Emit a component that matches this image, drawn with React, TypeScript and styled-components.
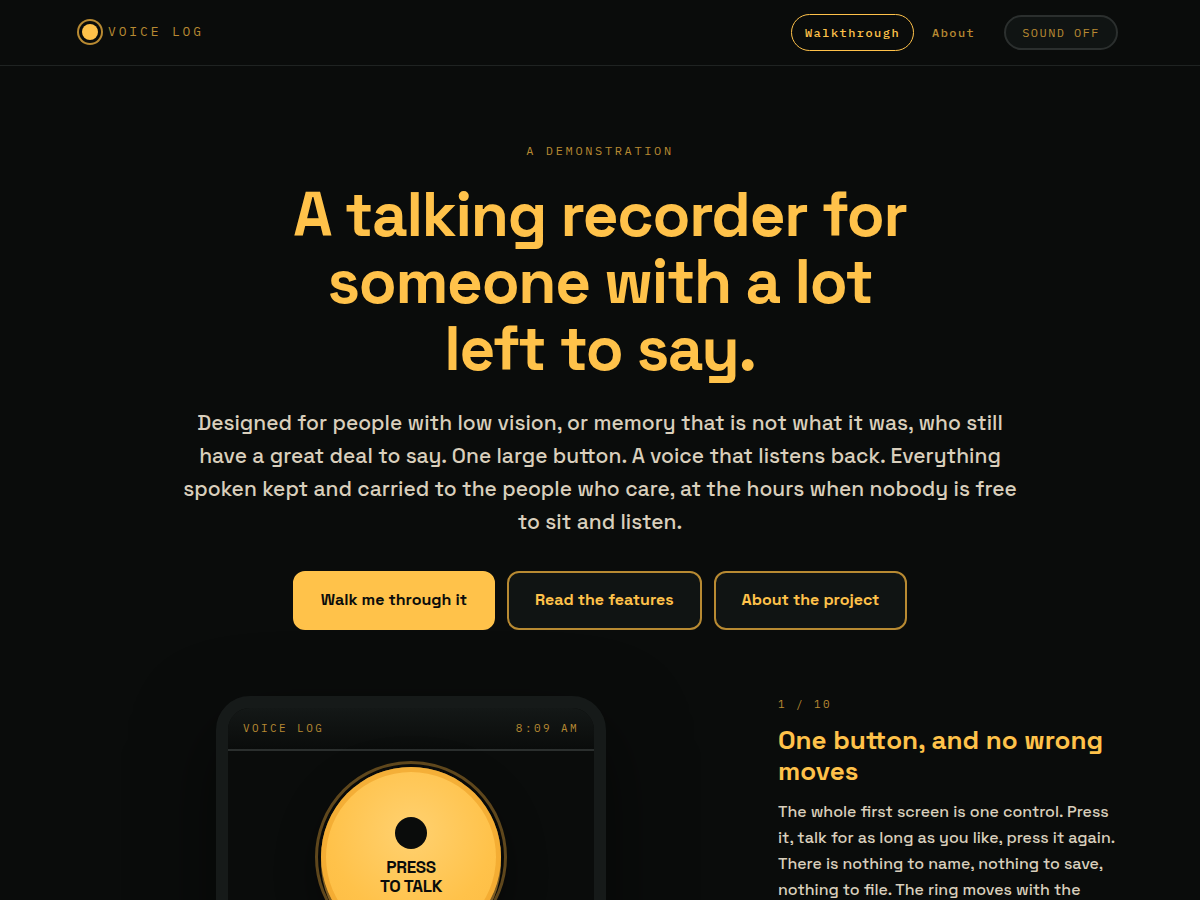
import React from 'react';
import styled, { createGlobalStyle } from 'styled-components';

const color = {
  page: '#0a0c0b',
  panel: '#101413',
  casing: '#161a19',
  line: '#1f2322',
  lineStrong: '#2b2f2e',
  amber: '#ffc24a',
  amberDim: '#b88a32',
  cream: '#d9cfbc',
  ink: '#0a0c0b',
};

const sans = "'Space Grotesk', Inter, 'Liberation Sans', sans-serif";
const mono = "'IBM Plex Mono', 'Liberation Mono', monospace";

const GlobalStyle = createGlobalStyle`
  *, *::before, *::after { box-sizing: border-box; }
  body {
    margin: 0;
    background: ${color.page};
    color: ${color.cream};
    font-family: ${sans};
    font-size: 16px;
  }
  h1, h2, p { margin: 0; }
`;

const Page = styled.div`
  min-height: 100vh;
`;

const Header = styled.header`
  border-bottom: 1px solid ${color.line};
`;

const Container = styled.div`
  max-width: 1100px;
  margin: 0 auto;
  padding: 0 32px;
`;

const HeaderRow = styled(Container)`
  display: flex;
  align-items: center;
  justify-content: space-between;
  min-height: 65px;
  padding-bottom: 1px;
`;

const Brand = styled.a`
  display: flex;
  align-items: center;
  gap: 10px;
  color: ${color.amberDim};
  font: 400 13px/20px ${mono};
  letter-spacing: 0.22em;
  text-decoration: none;
`;

const BrandDot = styled.span`
  width: 16px;
  height: 16px;
  border-radius: 50%;
  background: ${color.amber};
  box-shadow: 0 0 0 3px ${color.page}, 0 0 0 5px ${color.amberDim};
`;

const Nav = styled.nav`
  display: flex;
  align-items: center;
  gap: 4px;
`;

const NavLink = styled.a<{ $active?: boolean }>`
  padding: 9px 13px;
  border: 1px solid ${(p) => (p.$active ? color.amber : 'transparent')};
  border-radius: 999px;
  color: ${(p) => (p.$active ? color.amber : color.amberDim)};
  font: 500 12px/17px ${mono};
  letter-spacing: 0.12em;
  text-decoration: none;
`;

const SoundToggle = styled.button`
  margin-left: 11px;
  padding: 8px 16px;
  border: 2px solid ${color.lineStrong};
  border-radius: 999px;
  background: ${color.panel};
  color: ${color.amberDim};
  font: 400 12px/15px ${mono};
  letter-spacing: 0.12em;
  cursor: pointer;
`;

const Hero = styled(Container)`
  display: flex;
  flex-direction: column;
  align-items: center;
  padding-top: 76px;
  text-align: center;
`;

const Eyebrow = styled.p`
  margin-bottom: 21px;
  color: ${color.amberDim};
  font: 400 12px/18px ${mono};
  letter-spacing: 0.22em;
`;

const Headline = styled.h1`
  max-width: 640px;
  margin-bottom: 24px;
  color: ${color.amber};
  font-size: 62px;
  font-weight: 700;
  letter-spacing: -0.02em;
  line-height: 67px;
`;

const Lede = styled.p`
  max-width: 840px;
  margin-bottom: 33px;
  font-size: 21px;
  font-weight: 500;
  line-height: 33px;
`;

const Actions = styled.div`
  display: flex;
  flex-wrap: wrap;
  justify-content: center;
  gap: 12px;
`;

const Action = styled.a<{ $primary?: boolean }>`
  padding: 17px 26px 18px;
  border: 2px solid ${(p) => (p.$primary ? color.amber : color.amberDim)};
  border-radius: 12px;
  background: ${(p) => (p.$primary ? color.amber : color.panel)};
  color: ${(p) => (p.$primary ? color.ink : color.amber)};
  font: 600 16px/20px ${sans};
  text-decoration: none;
`;

const Stage = styled(Container)`
  display: grid;
  grid-template-columns: minmax(0, 1fr) 340px;
  gap: 38px;
  padding-top: 66px;
  padding-bottom: 66px;
`;

const Phone = styled.section`
  justify-self: center;
  width: 100%;
  max-width: 390px;
  overflow: hidden;
  border: 12px solid ${color.casing};
  border-radius: 34px;
  background: ${color.page};
  box-shadow: 0 30px 80px rgba(0, 0, 0, 0.5);
`;

const PhoneBar = styled.div`
  display: flex;
  justify-content: space-between;
  padding: 11px 15px 12px;
  border-bottom: 2px solid ${color.lineStrong};
  background: linear-gradient(#141817, ${color.page});
  color: ${color.amberDim};
  font: 400 11px/18px ${mono};
  letter-spacing: 0.22em;
`;

const PhoneScreen = styled.div`
  display: flex;
  justify-content: center;
  padding: 16px 0 240px;
`;

const TalkButton = styled.button`
  position: relative;
  display: flex;
  flex-direction: column;
  align-items: center;
  gap: 9px;
  width: 180px;
  height: 180px;
  padding: 50px 0 0;
  border: 0;
  border-radius: 50%;
  background: radial-gradient(circle at 50% 36%, #ffd170, ${color.amber} 56%, #fbb93e);
  box-shadow: inset 0 0 0 5px rgba(236, 160, 38, 0.6), 0 6px 0 #7d5c22, 0 16px 40px rgba(0, 0, 0, 0.5);
  color: ${color.ink};
  font: 700 17px/19px ${sans};
  letter-spacing: -0.02em;
  text-align: center;
  cursor: pointer;

  &::before {
    content: '';
    position: absolute;
    inset: -6px;
    border: 3px solid #5f471c;
    border-radius: 50%;
  }
`;

const RecordDot = styled.span`
  width: 32px;
  height: 32px;
  border-radius: 50%;
  background: ${color.ink};
`;

const TalkLabel = styled.span`
  max-width: 70px;
`;

const Step = styled.article`
  display: flex;
  flex-direction: column;
`;

const StepCount = styled.p`
  margin-bottom: 13px;
  color: ${color.amberDim};
  font: 400 11px/16px ${mono};
  letter-spacing: 0.22em;
`;

const StepTitle = styled.h2`
  margin-bottom: 12px;
  color: ${color.amber};
  font-size: 26px;
  font-weight: 700;
  line-height: 31px;
`;

const StepText = styled.p`
  font-size: 16px;
  font-weight: 500;
  line-height: 26px;
`;

export default function App() {
  return (
    <Page>
      <GlobalStyle />
      <Header>
        <HeaderRow>
          <Brand href="#top">
            <BrandDot />
            VOICE LOG
          </Brand>
          <Nav>
            <NavLink href="#walkthrough" $active>Walkthrough</NavLink>
            <NavLink href="#about">About</NavLink>
            <SoundToggle type="button">SOUND OFF</SoundToggle>
          </Nav>
        </HeaderRow>
      </Header>
      <main>
        <Hero>
          <Eyebrow>A DEMONSTRATION</Eyebrow>
          <Headline>A talking recorder for someone with a lot left to say.</Headline>
          <Lede>
            Designed for people with low vision, or memory that is not what it was, who still have a
            great deal to say. One large button. A voice that listens back. Everything spoken kept and
            carried to the people who care, at the hours when nobody is free to sit and listen.
          </Lede>
          <Actions>
            <Action href="#walkthrough" $primary>Walk me through it</Action>
            <Action href="#features">Read the features</Action>
            <Action href="#about">About the project</Action>
          </Actions>
        </Hero>
        <Stage id="walkthrough">
          <Phone>
            <PhoneBar>
              <span>VOICE LOG</span>
              <span>8:09 AM</span>
            </PhoneBar>
            <PhoneScreen>
              <TalkButton type="button">
                <RecordDot />
                <TalkLabel>PRESS TO TALK</TalkLabel>
              </TalkButton>
            </PhoneScreen>
          </Phone>
          <Step>
            <StepCount>1 / 10</StepCount>
            <StepTitle>One button, and no wrong moves</StepTitle>
            <StepText>
              The whole first screen is one control. Press it, talk for as long as you like, press it
              again. There is nothing to name, nothing to save, nothing to file. The ring moves with the
            </StepText>
          </Step>
        </Stage>
      </main>
    </Page>
  );
}
